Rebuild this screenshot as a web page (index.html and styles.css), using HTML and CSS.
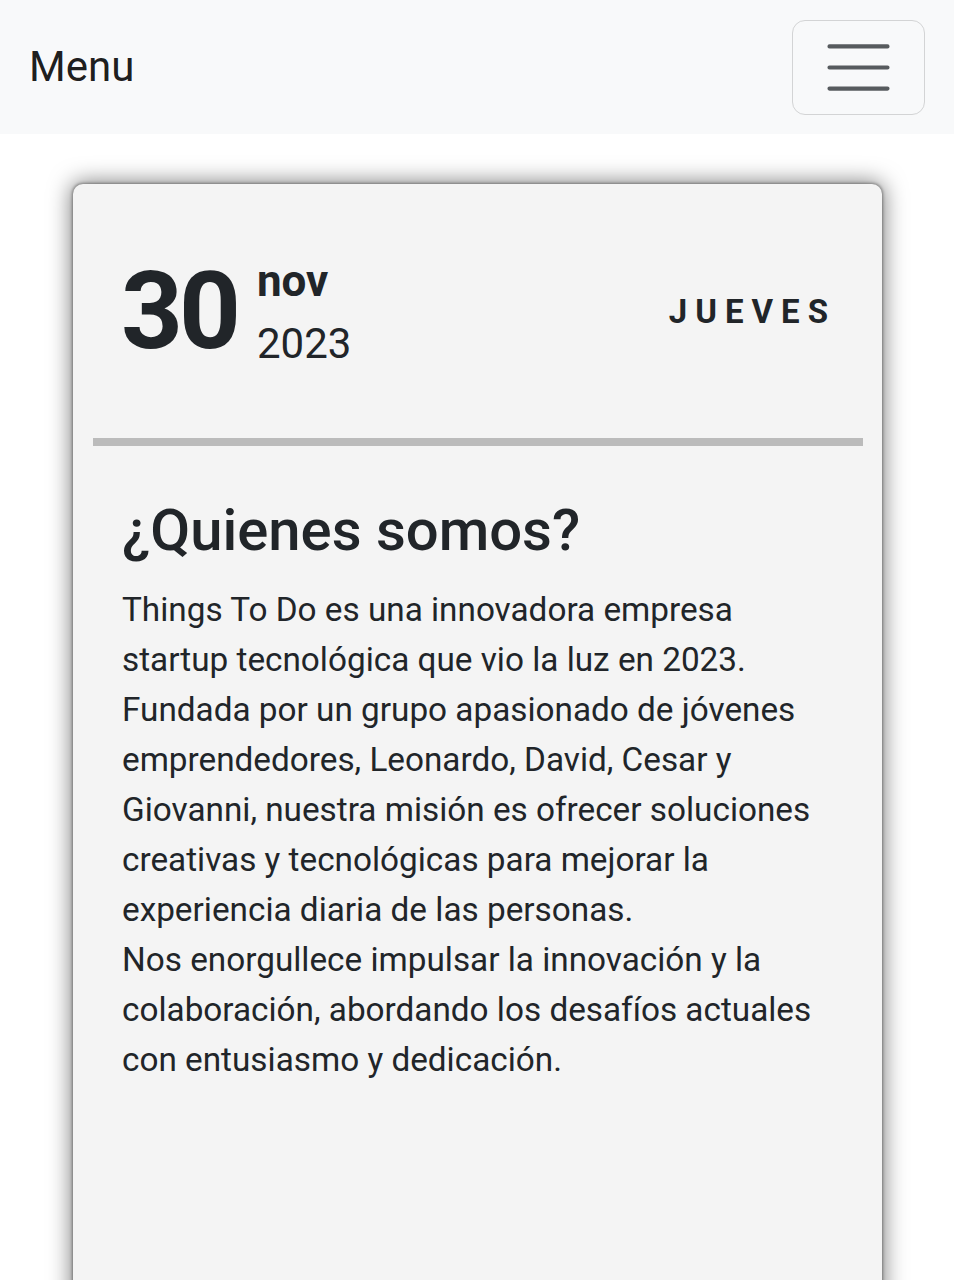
FILE: index.html
```html
<!DOCTYPE html>
<html lang="es">
<head>
<meta charset="utf-8">
<title>Menu</title>
<link rel="stylesheet" href="styles.css">
</head>
<body>
<nav class="navbar">
  <span class="brand">Menu</span>
  <button class="toggler" type="button" aria-label="Toggle navigation">
    <svg class="toggler-icon" viewBox="0 0 30 30" width="79" height="79" aria-hidden="true">
      <path d="M4 7h22M4 15h22M4 23h22" stroke="rgba(33,37,41,0.75)" stroke-width="1.6" stroke-linecap="round" fill="none"/>
    </svg>
  </button>
</nav>
<main class="main">
  <section class="card">
    <header class="date-row">
      <div class="date">
        <span class="day">30</span>
        <div class="month-year">
          <span class="month">nov</span>
          <span class="year">2023</span>
        </div>
      </div>
      <span class="weekday">JUEVES</span>
    </header>
    <div class="divider"></div>
    <div class="card-body">
      <h2 class="title">¿Quienes somos?</h2>
      <p class="text">Things To Do es una innovadora empresa startup tecnológica que vio la luz en 2023. Fundada por un grupo apasionado de jóvenes emprendedores, Leonardo, David, Cesar y Giovanni, nuestra misión es ofrecer soluciones creativas y tecnológicas para mejorar la experiencia diaria de las personas.<br>Nos enorgullece impulsar la innovación y la colaboración, abordando los desafíos actuales con entusiasmo y dedicación.</p>
    </div>
  </section>
</main>
</body>
</html>
```

FILE: styles.css
```css
* { box-sizing: border-box; }

html, body {
  margin: 0;
  padding: 0;
  background: #ffffff;
}

body {
  font-family: Roboto, "Liberation Sans", Arial, sans-serif;
  color: #212529;
  overflow: hidden;
  height: 1280px;
}

.navbar {
  height: 134px;
  background: #f8f9fa;
  display: flex;
  align-items: center;
  justify-content: space-between;
  padding: 0 29px 0 30px;
}

.brand {
  font-size: 42px;
  color: rgba(0, 0, 0, 0.9);
  line-height: 1;
  margin-left: -1px;
}

.toggler {
  width: 133px;
  height: 95px;
  border: 1.5px solid #d3d4d5;
  border-radius: 13px;
  background: transparent;
  display: flex;
  align-items: center;
  justify-content: center;
  padding: 0;
}

.toggler-icon { display: block; }

.main {
  padding: 50px 72px 0 73px;
}

.card {
  background: #f4f4f4;
  border-radius: 10px;
  min-height: 1200px;
  box-shadow: 0 0 22px 2px rgba(0, 0, 0, 0.5), 0 0 3px 1px rgba(0, 0, 0, 0.35);
}

.date-row {
  height: 254px;
  display: flex;
  align-items: center;
  justify-content: space-between;
  padding: 0 54px 0 48px;
}

.date {
  display: flex;
  align-items: center;
  gap: 20px;
}

.day {
  font-size: 108px;
  font-weight: 700;
  line-height: 1;
  letter-spacing: -4px;
}

.month-year {
  display: flex;
  flex-direction: column;
  padding-top: 22px;
}

.month {
  font-size: 44px;
  font-weight: 700;
  line-height: 44px;
}

.year {
  font-size: 42px;
  font-weight: 400;
  line-height: 82px;
}

.weekday {
  font-size: 33px;
  font-weight: 700;
  letter-spacing: 8px;
  margin-right: -8px;
}

.divider {
  height: 8px;
  background: #bbbbbb;
  margin: 0 19px 0 20px;
}

.card-body {
  padding: 50px 56px 0 49px;
}

.title {
  margin: 0 0 19px;
  font-size: 58px;
  font-weight: 500;
  line-height: 1.2;
}

.text {
  margin: 0;
  font-size: 33.3px;
  line-height: 50px;
}
```
